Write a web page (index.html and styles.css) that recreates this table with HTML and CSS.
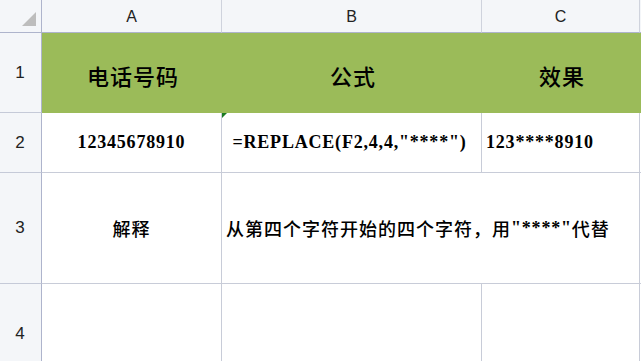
FILE: index.html
```html
<!DOCTYPE html>
<html lang="zh-CN">
<head>
<meta charset="utf-8">
<title>REPLACE</title>
<link rel="stylesheet" href="styles.css">
</head>
<body>
<div class="sheet">
  <div class="corner"><span class="tri"></span></div>
  <div class="colhead">A</div>
  <div class="colhead">B</div>
  <div class="colhead">C</div>
  <div class="colhead last"></div>

  <div class="rowhead r1">1</div>
  <div class="cell head zh">电话号码</div>
  <div class="cell head zh">公式</div>
  <div class="cell head zh">效果</div>
  <div class="cell blank r1"></div>

  <div class="rowhead r2">2</div>
  <div class="cell center lat">12345678910</div>
  <div class="cell center lat mark">=REPLACE(F2,4,4,"****")<span class="flag"></span></div>
  <div class="cell left lat">123****8910</div>
  <div class="cell blank"></div>

  <div class="rowhead r3">3</div>
  <div class="cell center"><span class="zh">解释</span></div>
  <div class="cell left span2"><span class="zh">从第四个字符开始的四个字符，用</span><span class="lat">"****"</span><span class="zh">代替</span></div>
  <div class="cell blank"></div>

  <div class="rowhead r4">4</div>
  <div class="cell open"></div>
  <div class="cell open"></div>
  <div class="cell open"></div>
  <div class="cell blank open"></div>
</div>
</body>
</html>
```

FILE: styles.css
```css
html, body {
  margin: 0;
  padding: 0;
  background: #ffffff;
  overflow: hidden;
}

.sheet {
  display: grid;
  grid-template-columns: 42px 180px 260px 158px 1fr;
  grid-template-rows: 33px 80px 60px 111px 77px;
  width: 641px;
  height: 361px;
}

.sheet > div {
  box-sizing: border-box;
}

.corner {
  background: #f4f6f9;
  border-right: 1px solid #aeb4cc;
  border-bottom: 1px solid #aeb4cc;
  position: relative;
}

.tri {
  position: absolute;
  left: 22px;
  top: 12px;
  width: 0;
  height: 0;
  border-left: 14px solid transparent;
  border-bottom: 14px solid #bdbdbd;
}

.colhead {
  background: #f4f6f9;
  border-right: 1px solid #cfd3dd;
  border-bottom: 1px solid #aeb4cc;
  font-family: "Liberation Sans", "Noto Sans", sans-serif;
  font-size: 16px;
  color: #222;
  display: flex;
  align-items: center;
  justify-content: center;
  padding-top: 1px;
}

.colhead.last {
  border-right: none;
}

.rowhead {
  background: #f4f6f9;
  border-right: 1px solid #aeb4cc;
  border-bottom: 1px solid #c5cad8;
  font-family: "Liberation Sans", "Noto Sans", sans-serif;
  font-size: 17px;
  color: #222;
  display: flex;
  align-items: center;
  justify-content: center;
  padding-right: 1px;
}

.rowhead.r4 {
  border-bottom: none;
  padding-top: 23px;
}

.cell {
  border-right: 1px solid #c8ccd8;
  border-bottom: 1px solid #c8ccd8;
  display: flex;
  align-items: center;
  color: #000;
  font-family: "Liberation Serif", "Noto Sans CJK SC", serif;
  font-size: 18px;
  white-space: nowrap;
}

.cell.open {
  border-bottom: none;
}

.cell.blank {
  border-right: none;
}

.head {
  background: #9bbb59;
  border-right: none;
  border-bottom: 1px solid #9bbb59;
  justify-content: center;
  font-size: 22px;
  letter-spacing: 2px;
  padding-top: 5px;
  padding-left: 2px;
}

.blank.r1 {
  background: #9bbb59;
  border-bottom-color: #9bbb59;
}

.center {
  justify-content: center;
}

.left {
  justify-content: flex-start;
  padding-left: 4px;
}

.span2 {
  grid-column: span 2;
}

.zh {
  font-family: "Noto Sans CJK SC", sans-serif;
  font-weight: 500;
  letter-spacing: 1px;
}

.lat {
  font-family: "Liberation Serif", "Noto Sans CJK SC", serif;
  font-weight: 700;
  letter-spacing: 0.8px;
}

.mark {
  position: relative;
  padding-right: 4px;
}

.flag {
  position: absolute;
  left: 0;
  top: 0;
  width: 0;
  height: 0;
  border-top: 5px solid #1b7a22;
  border-right: 5px solid transparent;
}
```
